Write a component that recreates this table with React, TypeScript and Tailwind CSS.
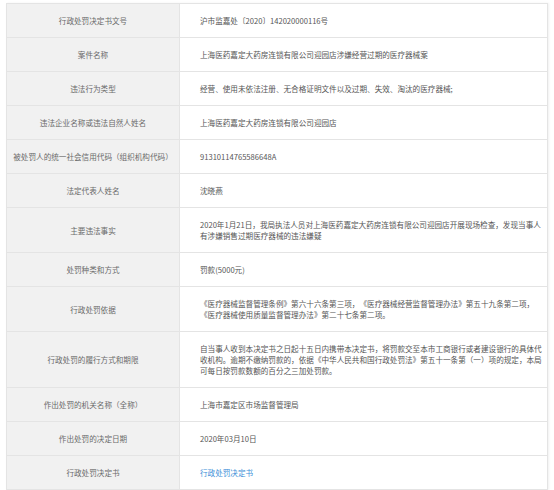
type Row = {
  label: string;
  value: string;
  link?: boolean;
};

const rows: Row[] = [
  { label: "行政处罚决定书文号", value: "沪市监嘉处〔2020〕142020000116号" },
  { label: "案件名称", value: "上海医药嘉定大药房连锁有限公司迎园店涉嫌经营过期的医疗器械案" },
  { label: "违法行为类型", value: "经营、使用未依法注册、无合格证明文件以及过期、失效、淘汰的医疗器械;" },
  { label: "违法企业名称或违法自然人姓名", value: "上海医药嘉定大药房连锁有限公司迎园店" },
  { label: "被处罚人的统一社会信用代码（组织机构代码）", value: "91310114765586648A" },
  { label: "法定代表人姓名", value: "沈晓燕" },
  {
    label: "主要违法事实",
    value:
      "2020年1月21日，我局执法人员对上海医药嘉定大药房连锁有限公司迎园店开展现场检查，发现当事人有涉嫌销售过期医疗器械的违法嫌疑",
  },
  { label: "处罚种类和方式", value: "罚款(5000元)" },
  {
    label: "行政处罚依据",
    value:
      "《医疗器械监督管理条例》第六十六条第三项，《医疗器械经营监督管理办法》第五十九条第二项，《医疗器械使用质量监督管理办法》第二十七条第二项。",
  },
  {
    label: "行政处罚的履行方式和期限",
    value:
      "自当事人收到本决定书之日起十五日内携带本决定书，将罚款交至本市工商银行或者建设银行的具体代收机构。逾期不缴纳罚款的，依据《中华人民共和国行政处罚法》第五十一条第（一）项的规定，本局可每日按罚款数额的百分之三加处罚款。",
  },
  { label: "作出处罚的机关名称（全称）", value: "上海市嘉定区市场监督管理局" },
  { label: "作出处罚的决定日期", value: "2020年03月10日" },
  { label: "行政处罚决定书", value: "行政处罚决定书", link: true },
];

export default function App() {
  return (
    <div
      className="w-[554px] h-[490px] bg-white pt-[3px] pl-[6px] text-[7.6px] leading-[11px] [text-spacing-trim:space-all]"
      style={{ fontFamily: '"Noto Sans CJK SC", "Noto Sans", sans-serif' }}
    >
      <div className="w-[542px] border border-[#e4e4e4] shadow-[1px_0_2px_rgba(0,0,0,0.06)]">
        {rows.map((row, i) => (
          <div
            key={row.label}
            className={`grid grid-cols-[173px_1fr] ${i < rows.length - 1 ? "border-b border-[#e4e4e4]" : ""}`}
          >
            <div className="bg-[#f1f1f1] text-[#6a6a6a] flex items-center justify-center text-center py-[11px] border-r border-[#e4e4e4]">
              {row.label}
            </div>
            <div className="pl-[20px] pr-[3px] py-[11px] text-[#555]">
              {row.link ? <span className="text-[#3d8fd8]">{row.value}</span> : row.value}
            </div>
          </div>
        ))}
      </div>
    </div>
  );
}
